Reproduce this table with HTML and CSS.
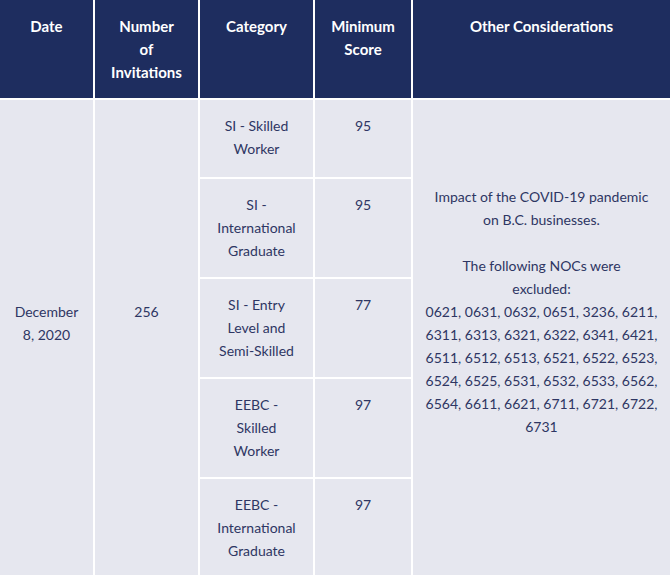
FILE: index.html
```html
<!DOCTYPE html>
<html>
<head>
<meta charset="utf-8">
<link rel="stylesheet" href="styles.css">
</head>
<body>
<table class="draws">
  <colgroup>
    <col class="c-date">
    <col class="c-num">
    <col class="c-cat">
    <col class="c-score">
    <col class="c-other">
  </colgroup>
  <thead>
    <tr class="head-row">
      <th>Date</th>
      <th>Number<br>of<br>Invitations</th>
      <th>Category</th>
      <th>Minimum<br>Score</th>
      <th>Other Considerations</th>
    </tr>
  </thead>
  <tbody>
    <tr class="row-short">
      <td rowspan="5" class="span-cell">December<br>8, 2020</td>
      <td rowspan="5" class="span-cell">256</td>
      <td>SI - Skilled<br>Worker</td>
      <td>95</td>
      <td rowspan="5" class="other-cell">Impact of the COVID-19 pandemic<br>on B.C. businesses.<br><br>The following NOCs were<br>excluded:<br>0621, 0631, 0632, 0651, 3236, 6211,<br>6311, 6313, 6321, 6322, 6341, 6421,<br>6511, 6512, 6513, 6521, 6522, 6523,<br>6524, 6525, 6531, 6532, 6533, 6562,<br>6564, 6611, 6621, 6711, 6721, 6722,<br>6731</td>
    </tr>
    <tr class="row-tall">
      <td>SI -<br>International<br>Graduate</td>
      <td>95</td>
    </tr>
    <tr class="row-tall">
      <td>SI - Entry<br>Level and<br>Semi-Skilled</td>
      <td>77</td>
    </tr>
    <tr class="row-tall">
      <td>EEBC -<br>Skilled<br>Worker</td>
      <td>97</td>
    </tr>
    <tr class="row-tall">
      <td>EEBC -<br>International<br>Graduate</td>
      <td>97</td>
    </tr>
  </tbody>
</table>
</body>
</html>
```

FILE: styles.css
```css
html, body {
  margin: 0;
  padding: 0;
  background: #ffffff;
}

.draws {
  width: 670px;
  border-collapse: collapse;
  border-style: hidden;
  table-layout: fixed;
  font-family: Lato, "Open Sans", sans-serif;
  font-size: 14px;
  line-height: 23px;
  color: #2e3663;
}

.c-date { width: 94px; }
.c-num { width: 105px; }
.c-cat { width: 115px; }
.c-score { width: 98px; }
.c-other { width: 258px; }

.draws th,
.draws td {
  border: 2px solid #ffffff;
  text-align: center;
  vertical-align: top;
  padding: 14px 4px 0 4px;
  box-sizing: border-box;
}

.draws th {
  background: #1e2d5f;
  color: #ffffff;
  font-weight: 700;
  font-size: 15px;
  padding-top: 15px;
}

.draws td {
  background: #e6e7ef;
}

.head-row { height: 99px; }
.row-short { height: 79px; }
.row-tall { height: 100px; }

.draws td.span-cell {
  padding-top: 200px;
}

.draws td.other-cell {
  padding-top: 85px;
  white-space: nowrap;
}
```
